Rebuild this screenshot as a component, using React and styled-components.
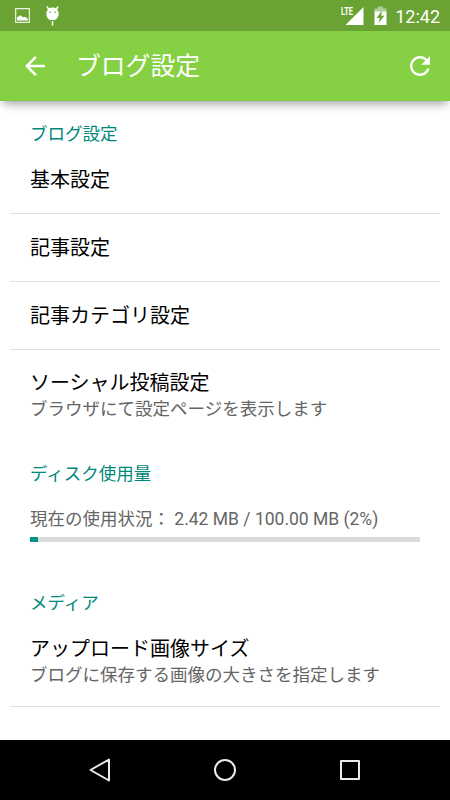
import React from "react";
import styled, { createGlobalStyle } from "styled-components";

const GlobalStyle = createGlobalStyle`
  * { box-sizing: border-box; }
  body {
    margin: 0;
    background: #fff;
    font-family: Roboto, "Noto Sans CJK JP", sans-serif;
  }
`;

const Screen = styled.div`
  display: flex;
  flex-direction: column;
  width: 450px;
  height: 800px;
  overflow: hidden;
  background: #fff;
`;

const StatusBar = styled.div`
  display: flex;
  flex: none;
  align-items: center;
  justify-content: space-between;
  height: 31px;
  padding: 0 10px 0 15px;
  background: #6aa334;
`;

const StatusGroup = styled.div`
  display: flex;
  align-items: center;
  height: 31px;
`;

const StatusIcon = styled.svg`
  display: block;
  margin-right: ${(p) => p.$gap}px;
`;

const Clock = styled.span`
  color: #fff;
  font-size: 18px;
  font-weight: 400;
  line-height: 31px;
  padding-top: 2px;
`;

const AppBar = styled.header`
  display: flex;
  flex: none;
  align-items: center;
  height: 70px;
  padding: 0 15px 0 20px;
  background: #86d143;
  border-bottom: 1px solid #80cc38;
  box-shadow: 0 6px 9px -3px rgba(0, 0, 0, 0.36);
`;

const BarTitle = styled.h1`
  flex: 1;
  margin: 0 0 0 26px;
  padding-top: 2px;
  color: #fff;
  font-size: 24.8px;
  font-weight: 400;
  line-height: 36px;
`;

const IconButton = styled.button`
  display: flex;
  padding: 0;
  border: 0;
  background: none;
`;

const Settings = styled.main`
  flex: 1;
  padding: 22px 10px 0;
`;

const SectionTitle = styled.h2`
  margin: ${(p) => p.$top || 0}px 0 0;
  padding-left: 20px;
  color: #00897b;
  font-size: 17.5px;
  font-weight: 400;
  line-height: 22px;
`;

const Row = styled.div`
  height: ${(p) => p.$height || 68}px;
  padding: ${(p) => p.$top || 21}px 20px 0;
  border-bottom: 1px solid ${(p) => (p.$last ? "transparent" : "#e0e0e0")};
`;

const RowTitle = styled.div`
  color: #000;
  font-size: 20px;
  line-height: 26px;
`;

const Summary = styled.div`
  color: #656565;
  font-size: 17.5px;
  line-height: 26px;
  white-space: nowrap;
`;

const Usage = styled.div`
  padding: 21px 20px 0;
`;

const Track = styled.div`
  height: 5px;
  margin-top: 5px;
  background: #dbdbdb;
`;

const Fill = styled.div`
  width: ${(p) => p.$percent}%;
  height: 5px;
  background: #009384;
`;

const NavBar = styled.nav`
  display: flex;
  flex: none;
  align-items: center;
  justify-content: center;
  gap: 95px;
  height: 60px;
  background: #000;
`;

const NavIcon = ({ children }) => (
  <IconButton>
    <svg width="30" height="30" viewBox="0 0 30 30" fill="none" stroke="#ebebeb" strokeWidth="2" strokeLinejoin="round">
      {children}
    </svg>
  </IconButton>
);

export default function App() {
  return (
    <Screen>
      <GlobalStyle />
      <StatusBar>
        <StatusGroup>
          <StatusIcon $gap={15} width="15" height="15" viewBox="0 0 15 15">
            <path d="M.65.65h13.7v13.7H.65z" fill="none" stroke="#eaf3e1" strokeWidth="1.2" />
            <path d="M2 12.5V9.3l2-1 1-1 2 1.2 1.2.8 2-.5L13 11v1.5z" fill="#fff" />
          </StatusIcon>
          <StatusIcon $gap={0} width="15" height="20" viewBox="0 0 15 20">
            <path
              d="M2 .5 3.6 3.2Q7.5 1.5 11.4 3.2L13 .5M7.5 15v4.5"
              fill="none"
              stroke="#fff"
              strokeWidth="1.5"
            />
            <path d="M7.5 2.2c3.8 0 6.2 2 6.2 5.6S11 14.6 7.5 14.6 1.3 11.4 1.3 7.8s2.4-5.6 6.2-5.6" fill="#fff" />
            <path d="M5.8 14.6h3.4" stroke="#21a31d" strokeWidth=".8" />
            <circle cx="5" cy="6.2" r=".8" fill="#6aa334" />
            <circle cx="10.2" cy="6.2" r=".8" fill="#6aa334" />
          </StatusIcon>
        </StatusGroup>
        <StatusGroup>
          <StatusIcon $gap={10} width="23" height="20" viewBox="0 0 23 20">
            <path d="M22.5 1v18h-18z" fill="#fff" />
            <text
              x="0"
              y="9"
              fill="#fff"
              fontFamily="Roboto, sans-serif"
              fontSize="11"
              fontWeight="700"
              textLength="12"
              lengthAdjust="spacingAndGlyphs"
            >
              LTE
            </text>
          </StatusIcon>
          <StatusIcon $gap={8} width="13" height="20" viewBox="0 0 13 20">
            <path d="M4 .5h5v2h3.5V6H.5V2.500H4z" fill="#b1ce98" />
            <path d="M.5 5.500h12V19H.5z" fill="#fff" />
            <path d="M8 4.500 2.600 12h3.200l-1 5 5.600-7.200H7.200z" fill="#6aa334" />
          </StatusIcon>
          <Clock>12:42</Clock>
        </StatusGroup>
      </StatusBar>

      <AppBar>
        <IconButton aria-label="Back">
          <svg width="30" height="30" viewBox="0 0 24 24" fill="#fff">
            <path d="M20 11H7.830l5.590-5.590L12 4l-8 8 8 8 1.410-1.410L7.830 13H20v-2z" />
          </svg>
        </IconButton>
        <BarTitle>ブログ設定</BarTitle>
        <IconButton aria-label="Refresh">
          <svg width="30" height="30" viewBox="0 0 24 24" fill="#fff">
            <path d="M17.650 6.350C16.200 4.900 14.210 4 12 4c-4.420 0-7.990 3.580-7.990 8s3.570 8 7.990 8c3.730 0 6.840-2.550 7.730-6h-2.080c-.820 2.330-3.040 4-5.650 4-3.310 0-6-2.690-6-6s2.690-6 6-6c1.660 0 3.140.690 4.220 1.780L13 11h7V4l-2.350 2.350z" />
          </svg>
        </IconButton>
      </AppBar>

      <Settings>
        <SectionTitle>ブログ設定</SectionTitle>
        <Row $height={69} $top={22}>
          <RowTitle>基本設定</RowTitle>
        </Row>
        <Row>
          <RowTitle>記事設定</RowTitle>
        </Row>
        <Row>
          <RowTitle>記事カテゴリ設定</RowTitle>
        </Row>
        <Row $height={91} $top={20} $last>
          <RowTitle>ソーシャル投稿設定</RowTitle>
          <Summary>ブラウザにて設定ページを表示します</Summary>
        </Row>
        <SectionTitle $top={22}>ディスク使用量</SectionTitle>
        <Usage>
          <Summary>現在の使用状況： 2.42 MB / 100.00 MB (2%)</Summary>
          <Track>
            <Fill $percent={2} />
          </Track>
        </Usage>
        <SectionTitle $top={50}>メディア</SectionTitle>
        <Row $height={93} $top={22}>
          <RowTitle>アップロード画像サイズ</RowTitle>
          <Summary>ブログに保存する画像の大きさを指定します</Summary>
        </Row>
      </Settings>

      <NavBar>
        <NavIcon>
          <path d="M24 4.500v21L5.500 15z" />
        </NavIcon>
        <NavIcon>
          <circle cx="15" cy="15" r="10" />
        </NavIcon>
        <NavIcon>
          <path d="M6 6h18v18H6z" />
        </NavIcon>
      </NavBar>
    </Screen>
  );
}
